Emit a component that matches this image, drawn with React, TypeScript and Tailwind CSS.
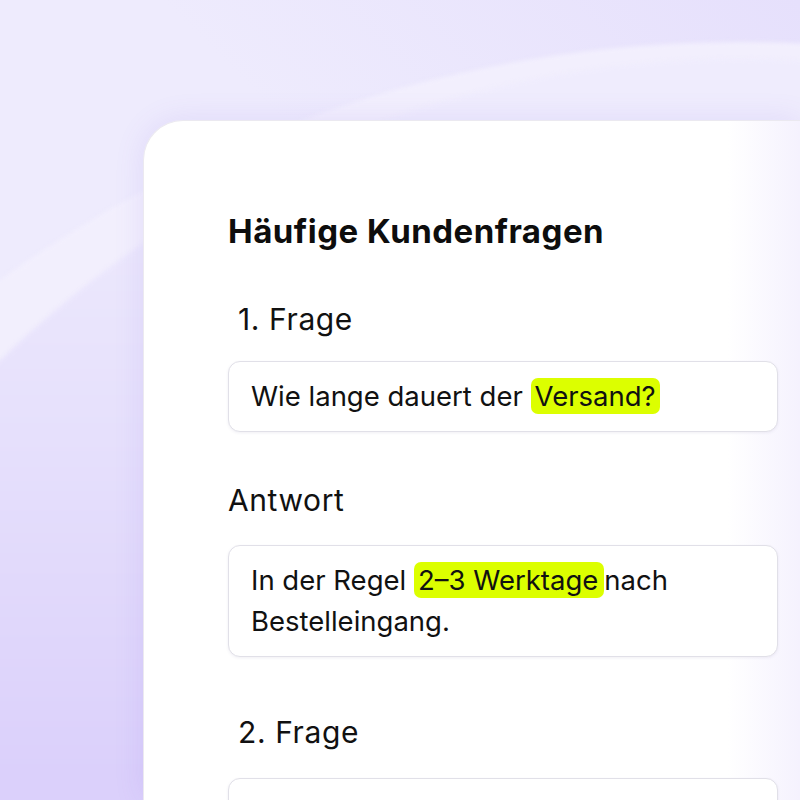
import React from 'react'

function Mark({ children, className = '' }: { children: React.ReactNode; className?: string }) {
  return (
    <span className={`rounded-[7px] bg-[#dcff00] py-[1px] [box-decoration-break:clone] ${className}`}>
      {children}
    </span>
  )
}

function Box({ children }: { children?: React.ReactNode }) {
  return (
    <div className="min-h-[71px] w-[550px] rounded-[12px] border border-[#e1e0e8] bg-white px-[22px] py-[14px] text-[27.5px] leading-[41px] text-[#111] shadow-[0_1px_3px_rgba(60,50,110,0.08)]">
      {children}
    </div>
  )
}

export default function App() {
  return (
    <div className="relative h-[800px] w-[800px] overflow-hidden bg-[linear-gradient(to_bottom_left,#e6e0fc,#eeebfd_40%)] font-['Inter',sans-serif]">
      {/* soft background arcs */}
      <div className="absolute left-[-529px] top-[42px] h-[2538px] w-[2538px] rounded-full bg-[#f2effd] blur-[2px]" />
      <div className="absolute left-[-319px] top-[59px] h-[2118px] w-[2118px] rounded-full bg-[linear-gradient(to_bottom,#efecfd_3%,#e6e0fc_18%,#dbd0fb_34%)] blur-[2px]" />

      <div className="relative flex h-full pl-[143px] pt-[120px]">
        <div className="flex-1 rounded-tl-[40px] border-l border-t border-[#ebe9f0] bg-[linear-gradient(to_right,#ffffff_89%,#f5f2fe)] pl-[84px] pt-[92px] shadow-[0_0_30px_rgba(120,90,220,0.12)]">
          <h1 className="text-[33px] font-bold leading-[36px] tracking-[0.5px] text-[#0d0d0d]">
            Häufige Kundenfragen
          </h1>

          <div className="mt-[52px] pl-[10px] text-[30px] leading-[36px] tracking-[0.6px] text-[#111]">
            1. Frage
          </div>
          <div className="mt-[24px]">
            <Box>
              Wie lange dauert der <Mark className="px-[4px]">Versand?</Mark>
            </Box>
          </div>

          <div className="mt-[50px] text-[30px] leading-[36px] tracking-[0.6px] text-[#111]">
            Antwort
          </div>
          <div className="mt-[27px]">
            <Box>
              In der Regel <Mark className="pl-[4px] pr-[6px]">2–3 Werktage</Mark>nach Bestelleingang.
            </Box>
          </div>

          <div className="mt-[57px] pl-[10px] text-[30px] leading-[36px] tracking-[0.6px] text-[#111]">
            2. Frage
          </div>
          <div className="mt-[28px]">
            <Box />
          </div>
        </div>
      </div>
    </div>
  )
}
